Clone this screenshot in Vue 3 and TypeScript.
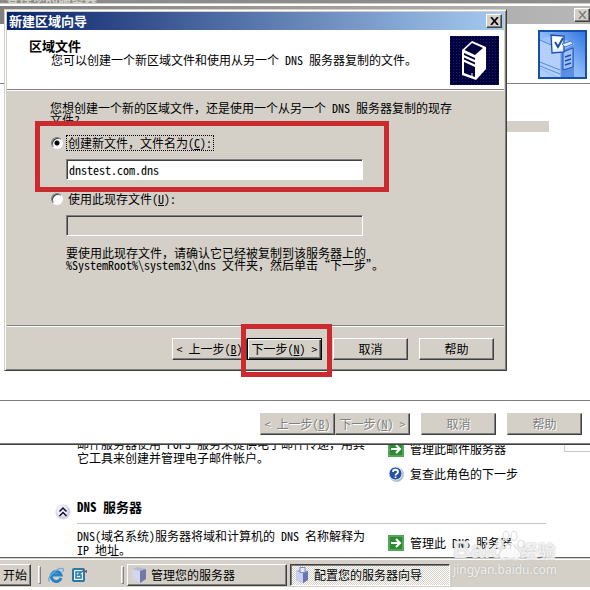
<script setup lang="ts">
import { ref } from 'vue'

interface WizardButton {
  text: string
  key?: string
  before?: string
  after?: string
  primary?: boolean
  spaced?: boolean
}

const buttons: WizardButton[] = [
  { before: '< ', text: '上一步', key: 'B' },
  { text: '下一步', key: 'N', after: ' >', primary: true },
  { text: '取消', spaced: true },
  { text: '帮助', spaced: true },
]

const source = ref<'new' | 'existing'>('new')
const fileName = ref('dnstest.com.dns')
const existingName = ref('')
</script>

<template>
  <div class="desktop">
    <main class="manage">
      <section class="role mail">
        <p class="about">邮件服务器使用 POP3 服务来提供电子邮件传递<span class="wide">，</span>用其<br />它工具来创建并管理电子邮件帐户。</p>
        <ul class="links">
          <li>
            <svg class="glyph" viewBox="0 0 16 16"><rect width="16" height="16" fill="#2d8a34" /><rect x="1" y="1" width="14" height="14" fill="none" stroke="#7cbf7c" /><path d="M3 8h9M8 4l4 4-4 4" fill="none" stroke="#fff" stroke-width="2" /></svg>
            <a href="#">管理此邮件服务器</a>
          </li>
          <li>
            <svg class="glyph" viewBox="0 0 16 16"><circle cx="8.500" cy="8.500" r="7.500" fill="#b4bccc" /><circle cx="7.500" cy="7.500" r="6.500" fill="#2450a8" stroke="#dce8fa" /><path d="M5 6c0-3 5-3 5 0 0 2-2.500 1.500-2.500 3.500M7.500 10.500v1.500" fill="none" stroke="#fff" stroke-width="1.800" /></svg>
            <a href="#">复查此角色的下一步</a>
          </li>
        </ul>
      </section>
      <header class="role-title">
        <svg class="glyph" viewBox="0 0 16 16"><circle cx="8" cy="8" r="7.500" fill="#d4d4e2" /><circle cx="7" cy="6.500" r="5.500" fill="#eeeef6" /><path d="M4.500 7.500L8 4l3.500 3.500M4.500 12L8 8.500l3.500 3.500" fill="none" stroke="#101028" stroke-width="1.500" /></svg>
        <h2>DNS 服务器</h2>
      </header>
      <section class="role dns">
        <p class="about">DNS(域名系统)服务器将域和计算机的 DNS 名称解释为<br />IP 地址。</p>
        <ul class="links">
          <li>
            <svg class="glyph" viewBox="0 0 16 16"><rect width="16" height="16" fill="#2d8a34" /><rect x="1" y="1" width="14" height="14" fill="none" stroke="#7cbf7c" /><path d="M3 8h9M8 4l4 4-4 4" fill="none" stroke="#fff" stroke-width="2" /></svg>
            <a href="#">管理此 DNS 服务器</a>
          </li>
        </ul>
      </section>
      <div class="side-box"></div>
    </main>

    <footer class="taskbar">
      <button class="start" type="button">开始</button>
      <span class="grip"></span>
      <svg class="quick" viewBox="0 0 16 16"><path d="M13 11A5 5 0 1 1 13 8H4" fill="none" stroke="#2583c8" stroke-width="3" /><path d="M1.500 14.500C-2 10 11-1 15.500 2c.5 1-.5 2-1 3" fill="none" stroke="#68acdc" stroke-width="1.300" /></svg>
      <svg class="quick" viewBox="0 0 16 16"><rect x="1" y="1" width="13" height="14" rx="2" fill="#2878a8" /><rect x="3" y="3" width="9" height="10" fill="#e8f4fa" /><path d="M10 5H5v6h5V8H7l6-5" fill="none" stroke="#2878a8" stroke-width="1.500" /><path d="M12 4l4-1v3z" fill="#a04840" /></svg>
      <span class="grip second"></span>
      <button class="task" type="button">
        <svg class="glyph" viewBox="0 0 16 16"><path d="M1 2l6-2 8 2v10l-6 4-8-4z" fill="#b4b8d8" /><path d="M1 2l8 2v12l-8-4z" fill="#d4d6ee" /><path d="M9 4l6-2v10l-6 4z" fill="#7478a4" /></svg>
        管理您的服务器
      </button>
      <button class="task active" type="button">
        <svg class="glyph" viewBox="0 0 16 16"><path d="M2 4l5-2 7 2v9l-5 3-7-3z" fill="#a4acd8" /><path d="M2 4l7 2v10l-7-3z" fill="#c8d0f0" /><path d="M9 6l5-2v9l-5 3z" fill="#6874b0" /><path d="M6 0.500h5v5H6z" fill="#e4ecfc" stroke="#7c8cc0" /></svg>
        配置您的服务器向导
      </button>
    </footer>

    <div class="under-title">管理您的服务器</div>

    <section class="parent">
      <div class="parent-bar">
        <button class="close dim" type="button" aria-label="关闭"><svg viewBox="0 0 9 8"><path d="M1 0l7 8M8 0L1 8" fill="none" stroke="#808080" stroke-width="1.600" /></svg></button>
      </div>
      <div class="parent-head">
        <svg class="big" viewBox="0 0 49 49">
          <defs>
            <linearGradient id="sky" x1="0" y1="1" x2="1" y2="0"><stop offset="0" stop-color="#b8d4fc" /><stop offset=".5" stop-color="#8cb8f8" /><stop offset="1" stop-color="#2870e0" /></linearGradient>
          </defs>
          <rect width="49" height="49" fill="url(#sky)" />
          <path d="M2 10l12-5 22 8v34l-12 2L2 39z" fill="#8cb4f2" />
          <path d="M2 10l20 9v29L2 38z" fill="#b4d0fa" />
          <path d="M2 10l12-5 22 9-12 7z" fill="#a0c4fa" />
          <path d="M23 21l13-6v33H23z" fill="#5c90e4" />
          <path d="M25 22l10-4v19l-10 3z" fill="#9cc0f8" stroke="#1c50b0" />
          <path d="M27 27l6-2M27 31l6-2M27 35l6-2" stroke="#1c50b0" stroke-width="1.400" />
          <path d="M2 32l20 8M2 36l20 8M2 10l20 9M24 43l12-4" stroke="#5888d8" fill="none" />
          <path d="M13 5l13 1v16l-12 1z" fill="#e0ecff" stroke="#1c50b0" stroke-width="1.300" />
          <path d="M15 7h9v12h-9z" fill="#fff" />
          <path d="M17 12l3 5 5-9" fill="none" stroke="#1850a8" stroke-width="2" />
          <path d="M24 14l9-3 2 3-8 3z" fill="#d8e8ff" stroke="#4078d0" />
          <rect x="1" y="1" width="47" height="47" fill="none" stroke="#1450a8" stroke-width="2" />
        </svg>
      </div>
      <div class="parent-body"><span class="selected-row"></span></div>
      <div class="actions disabled">
        <button v-for="b in buttons" :key="b.text" type="button" disabled :class="{ spaced: b.spaced }">{{ b.before }}{{ b.text }}<template v-if="b.key">(<u>{{ b.key }}</u>)</template>{{ b.after }}</button>
      </div>
    </section>

    <form class="dialog" @submit.prevent>
      <header class="title-bar">
        <h1>新建区域向导</h1>
        <button class="close" type="button" aria-label="关闭"><svg viewBox="0 0 9 8"><path d="M1 0l7 8M8 0L1 8" fill="none" stroke="#000" stroke-width="1.700" /></svg></button>
      </header>
      <div class="banner">
        <div class="banner-text">
          <h2>区域文件</h2>
          <p>您可以创建一个新区域文件和使用从另一个 DNS 服务器复制的文件。</p>
        </div>
        <svg class="big" viewBox="0 0 49 49">
          <defs>
            <pattern id="dots" width="3" height="3" patternUnits="userSpaceOnUse"><rect width="3" height="3" fill="#00003c" /><rect width="1" height="1" fill="#1c1c78" /></pattern>
          </defs>
          <rect width="49" height="49" fill="url(#dots)" />
          <path d="M12 14L22 5l14 6v22L26 44l-14-5z" fill="#fff" />
          <path d="M14.500 14L22 7l11 5-8 7z" fill="#00003c" />
          <path d="M14 17l11 5v2l-11-5zM14 21.500l11 5v2l-11-5zM14 26l11 5v10l-11-4z" fill="#00003c" />
          <path d="M22 37v3" stroke="#fff" />
        </svg>
      </div>
      <div class="content">
        <p class="question">您想创建一个新的区域文件<span class="wide">，</span>还是使用一个从另一个 DNS 服务器复制的现存文件?</p>
        <div class="choice marked">
          <div class="option">
            <input id="opt-new" v-model="source" type="radio" name="source" value="new" />
            <label id="lbl-new" class="focused" for="opt-new">创建新文件<span class="wide">，</span>文件名为(<u>C</u>):</label>
          </div>
          <input v-model="fileName" class="field" type="text" aria-labelledby="lbl-new" spellcheck="false" />
        </div>
        <div class="choice">
          <div class="option">
            <input id="opt-old" v-model="source" type="radio" name="source" value="existing" />
            <label id="lbl-old" for="opt-old">使用此现存文件(<u>U</u>):</label>
          </div>
          <input v-model="existingName" class="field" type="text" aria-labelledby="lbl-old" :disabled="source !== 'existing'" />
        </div>
        <p class="note">要使用此现存文件<span class="wide">，</span>请确认它已经被复制到该服务器上的<br />%SystemRoot%\system32\dns 文件夹<span class="wide">，</span>然后单击<span class="wide">“</span>下一步<span class="wide">”</span>。</p>
      </div>
      <div class="actions">
        <button v-for="b in buttons" :key="b.text" type="button" :class="{ spaced: b.spaced, primary: b.primary }">{{ b.before }}{{ b.text }}<template v-if="b.key">(<u>{{ b.key }}</u>)</template>{{ b.after }}</button>
      </div>
    </form>

    <div class="watermark">
      <div class="brand">Baidu<span>经验</span></div>
      <svg class="paw" viewBox="0 0 32 32"><ellipse cx="5" cy="14" rx="3" ry="4" /><ellipse cx="12" cy="6" rx="3" ry="4.500" /><ellipse cx="20" cy="6" rx="3" ry="4.500" /><ellipse cx="27" cy="14" rx="3" ry="4" /><path d="M16 13c4 0 5 5 9 8 4 4 1 10-4 9-3-1-7-1-10 0-5 1-8-5-4-9 4-3 5-8 9-8z" /></svg>
      <div class="site">jingyan.baidu.com</div>
    </div>
  </div>
</template>

<style>
body {
  margin: 0;
  overflow: hidden;
}
</style>

<style scoped>
* {
  box-sizing: border-box;
}

.desktop {
  position: relative;
  display: flex;
  flex-direction: column;
  min-height: 100vh;
  overflow: hidden;
  background: #fff;
  color: #000;
  font-family: "Noto Sans CJK SC", sans-serif;
  font-size: 12px;
  line-height: 14px;
  font-feature-settings: "hwid";
}

.wide {
  font-feature-settings: normal;
}

h1,
h2,
p,
ul {
  margin: 0;
  padding: 0;
}

h1,
h2 {
  font-size: 13px;
}

p {
  white-space: pre-wrap;
}

ul {
  list-style: none;
}

a {
  color: #000;
  text-decoration: none;
}

button,
input {
  margin: 0;
  padding: 0;
  font: inherit;
  font-feature-settings: inherit;
  color: inherit;
}

.glyph {
  flex: none;
  width: 16px;
  height: 16px;
}

/* Role list behind the wizards */
.manage {
  position: relative;
  flex: 1;
  display: flex;
  flex-direction: column;
  justify-content: flex-end;
}

.role {
  display: flex;
  padding-left: 77px;
}

.about {
  width: 311px;
  white-space: nowrap;
}

.links {
  display: flex;
  flex-direction: column;
  gap: 9px;
}

.links li {
  display: flex;
  align-items: center;
  gap: 6px;
}

.mail {
  align-items: center;
}

.mail .about {
  padding-bottom: 21px;
}

.role-title {
  display: flex;
  align-items: flex-end;
  gap: 6px;
  margin: 14px 44px 5px 55px;
}

.role-title .glyph {
  margin-bottom: 4px;
}

.role-title h2 {
  flex: 1;
  padding-bottom: 9px;
  border-bottom: 1px solid #c4c4c4;
}

.dns .links {
  padding-top: 6px;
}

.side-box {
  position: absolute;
  right: 0;
  bottom: 105px;
  width: 26px;
  height: 12px;
  border: 1px solid #c8c8c8;
  border-right: 0;
}

/* Taskbar */
.taskbar {
  display: flex;
  align-items: center;
  gap: 7px;
  height: 30px;
  margin-bottom: 3px;
  padding-top: 4px;
  border-top: 1px solid #606060;
  box-shadow: inset 0 1px #d4d0c8, inset 0 2px #fff;
  background: #d4d0c8;
}

.start,
.task {
  height: 22px;
  border: 1px solid;
  border-color: #fff #404040 #404040 #fff;
  box-shadow: inset -1px -1px #808080;
  background: #d4d0c8;
}

.start {
  width: 31px;
  border-left: 0;
}

.grip {
  width: 3px;
  height: 18px;
  border: 1px solid;
  border-color: #fff #808080 #808080 #fff;
}

.grip.second {
  margin-left: 27px;
}

.quick {
  width: 16px;
  height: 16px;
}

.task {
  display: flex;
  align-items: center;
  gap: 4px;
  flex: 0 1 160px;
  margin-left: -4px;
  padding-left: 3px;
  white-space: nowrap;
}

.task.active {
  border-color: #404040 #fff #fff #404040;
  box-shadow: inset 1px 1px #808080;
  background: conic-gradient(#fff 25%, #d4d0c8 0 50%, #fff 0 75%, #d4d0c8 0) 0 0 / 2px 2px;
}

/* Windows */
.under-title {
  position: absolute;
  top: 0;
  left: 0;
  right: 0;
  height: 4px;
  padding-left: 6px;
  overflow: hidden;
  font-size: 13px;
  font-weight: 700;
  line-height: 0;
  background: #8c8c8c;
  color: #d4d0c8;
}

.parent {
  position: absolute;
  top: 3px;
  left: 0;
  right: 0;
  bottom: 145px;
  display: flex;
  flex-direction: column;
  border: solid #d4d0c8;
  border-width: 1px 0 0;
  border-bottom: 1px solid #404040;
  box-shadow: inset 0 1px #fff, inset 0 -1px #808080;
  background: #fff;
}

.parent-bar {
  display: flex;
  align-items: center;
  justify-content: flex-end;
  height: 18px;
  margin-top: 2px;
  background: linear-gradient(90deg, #808080, #b8b8b8);
}

.parent-head {
  display: flex;
  justify-content: flex-end;
  padding: 6px 3px 4px;
  border-bottom: 1px solid #808080;
}

.parent-body {
  flex: 1;
  padding: 37px 41px 0;
  border-bottom: 1px solid #808080;
}

.selected-row {
  display: block;
  height: 11px;
  background: #d4d0c8;
}

.big {
  flex: none;
  width: 49px;
  height: 49px;
}

.close {
  display: flex;
  align-items: center;
  justify-content: center;
  width: 16px;
  height: 14px;
  border: 1px solid;
  border-color: #fff #404040 #404040 #fff;
  box-shadow: inset -1px -1px #808080;
  background: #d4d0c8;
}

.close svg {
  width: 9px;
  height: 8px;
}

.actions {
  display: flex;
  justify-content: flex-end;
}

.actions button {
  width: 75px;
  height: 22px;
  border: 1px solid;
  border-color: #fff #404040 #404040 #fff;
  box-shadow: inset -1px -1px #808080;
  background: #d4d0c8;
  white-space: pre;
}

.actions .spaced {
  margin-left: 11px;
}

.actions .primary {
  position: relative;
  border-color: #000;
  box-shadow: inset 1px 1px #fff, inset -1px -1px #404040, inset -2px -2px #808080;
}

.actions .primary::after {
  content: "";
  position: absolute;
  inset: -15px -11px -18px -7px;
  border: 5px solid #cb2a2f;
}

.disabled {
  padding: 12px 8px 9px;
}

.disabled button {
  border-color: #d4d0c8 #404040 #404040 #d4d0c8;
  color: #808080;
  text-shadow: 1px 1px #fff;
}

.dialog {
  position: absolute;
  top: 9px;
  left: 4px;
  right: 83px;
  padding: 2px;
  border: 1px solid;
  border-color: #d4d0c8 #404040 #404040 #d4d0c8;
  box-shadow: inset 1px 1px #fff, inset -1px -1px #808080;
  background: #d4d0c8;
}

.title-bar {
  display: flex;
  align-items: center;
  justify-content: space-between;
  height: 18px;
  padding: 0 2px;
  background: linear-gradient(90deg, #0a246a, #a6caf0);
  color: #fff;
}

.banner {
  display: flex;
  justify-content: space-between;
  padding: 6px 5px 4px 22px;
  border-bottom: 1px solid #808080;
  box-shadow: 0 1px #fff;
  background: #fff;
}

.banner-text {
  padding-top: 3px;
}

.banner p {
  padding-left: 22px;
  white-space: nowrap;
}

.content {
  padding: 12px 43px 54px;
  border-bottom: 1px solid #808080;
  box-shadow: 0 1px #fff;
}

.question {
  height: 24px;
  line-height: 12px;
}

.choice {
  margin-bottom: 11px;
}

.marked {
  position: relative;
  padding-top: 9px;
}

.marked::after {
  content: "";
  position: absolute;
  inset: -5px 72px -12px -15px;
  border: 5px solid #cb2a2f;
  pointer-events: none;
}

.option {
  display: flex;
  align-items: center;
  gap: 4px;
  height: 16px;
}

.option input {
  appearance: none;
  width: 12px;
  height: 12px;
  margin-left: 1px;
  border: 1px solid;
  border-color: #808080 #fff #fff #808080;
  border-radius: 50%;
  box-shadow: inset 1px 1px #404040;
  background: #fff;
}

.option input:checked {
  background: radial-gradient(circle, #000 2px, #fff 3px);
}

.option label {
  padding: 0 1px;
}

.focused {
  outline: 1px dotted #000;
}

.field {
  display: block;
  width: 297px;
  height: 21px;
  margin: 8px 0 0 16px;
  padding: 0 2px;
  border: 1px solid;
  border-color: #808080 #fff #fff #808080;
  border-radius: 0;
  box-shadow: inset 1px 1px #404040;
  background: #fff;
  outline: 0;
}

.field:disabled {
  background: #d4d0c8;
}

.note {
  padding-left: 16px;
  line-height: 12px;
  white-space: nowrap;
}

.dialog .actions {
  padding: 12px 10px 8px;
}

/* Site mark */
.watermark {
  position: absolute;
  right: 33px;
  bottom: 13px;
  color: rgba(255, 255, 255, 0.75);
  font-family: "Liberation Sans", "Noto Sans CJK SC", sans-serif;
  font-feature-settings: normal;
  text-shadow: 0 0 2px #b0b0b0;
}

.brand {
  display: flex;
  align-items: baseline;
  font-size: 24px;
  font-weight: 700;
  line-height: 22px;
}

.brand span {
  font-size: 18px;
}

.paw {
  position: absolute;
  left: 41px;
  top: -9px;
  width: 32px;
  height: 32px;
  fill: rgba(255, 255, 255, 0.7);
  stroke: #dcdcdc;
}

.site {
  font-family: "Noto Sans", sans-serif;
  font-size: 12px;
  text-align: center;
}
</style>
